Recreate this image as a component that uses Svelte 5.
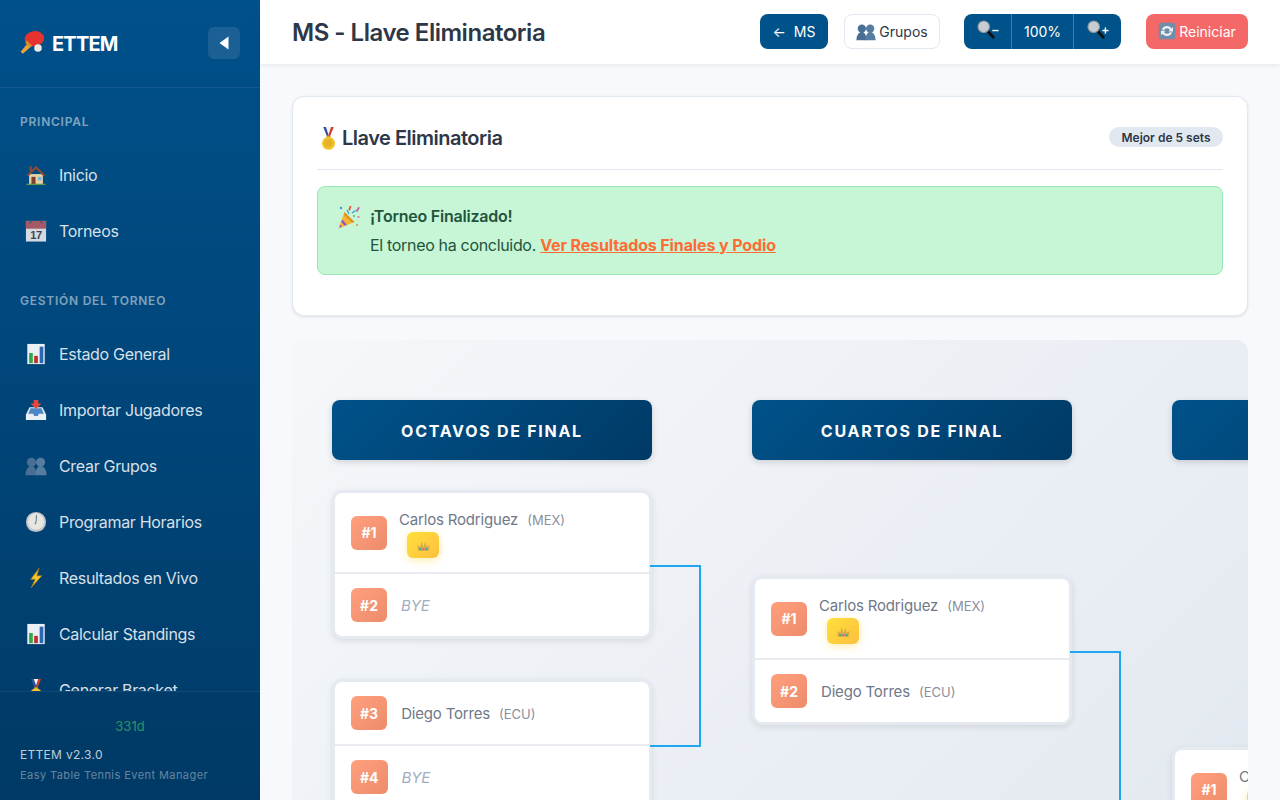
<script lang="ts">
  const sections = [
    { title: 'PRINCIPAL', items: [
      { icon: 'house', label: 'Inicio' },
      { icon: 'calendar', label: 'Torneos' }
    ]},
    { title: 'GESTIÓN DEL TORNEO', items: [
      { icon: 'chart', label: 'Estado General' },
      { icon: 'inbox', label: 'Importar Jugadores' },
      { icon: 'people', label: 'Crear Grupos' },
      { icon: 'clock', label: 'Programar Horarios' },
      { icon: 'bolt', label: 'Resultados en Vivo' },
      { icon: 'chart', label: 'Calcular Standings' },
      { icon: 'medal', label: 'Generar Bracket' }
    ]}
  ];

  const rounds = [
    { name: 'OCTAVOS DE FINAL', cls: 'r1', matches: [
      { line: 'down', players: [
        { seed: 1, name: 'Carlos Rodriguez', country: 'MEX', winner: true },
        { seed: 2, bye: true }
      ]},
      { line: 'flat', players: [
        { seed: 3, name: 'Diego Torres', country: 'ECU' },
        { seed: 4, bye: true }
      ]}
    ]},
    { name: 'CUARTOS DE FINAL', cls: 'r2', matches: [
      { line: 'long', players: [
        { seed: 1, name: 'Carlos Rodriguez', country: 'MEX', winner: true },
        { seed: 2, name: 'Diego Torres', country: 'ECU' }
      ]}
    ]},
    { name: 'SEMIFINALES', cls: 'r3', matches: [
      { line: '', players: [
        { seed: 1, name: 'Carlos Rodriguez', country: 'MEX', winner: true },
        { seed: 2, name: 'Diego Torres', country: 'ECU' }
      ]}
    ]}
  ];
</script>

{#snippet emoji(name: string, size: number)}
  <svg class="emoji" width={size} height={size} viewBox="0 0 24 24" aria-hidden="true">
    {#if name === 'paddle'}
      <path d="M6.5 13 L0.6 20 L2.6 22 L9.5 16 Z" fill="#e8a33a" />
      <ellipse cx="13.3" cy="8" rx="9" ry="7" fill="#e5332f" transform="rotate(-8 13.3 8)" />
      <path d="M5 12 L9 16.2 L11.5 14.8 L6 9.5 Z" fill="#d98c2b" />
      <circle cx="16.6" cy="16.6" r="3.5" fill="#ecebe8" />
    {:else if name === 'house'}
      <rect x="4.5" y="11" width="15" height="11" fill="#e8d3a8" />
      <path d="M12 2 L1.5 12.5 L4 13 L12 5.5 L20 13 L22.5 12.5 Z" fill="#8d4a36" />
      <rect x="5" y="2.5" width="2.5" height="5" fill="#8d4a36" />
      <rect x="7" y="14" width="4.5" height="8" fill="#7a3f2f" />
      <rect x="14" y="14" width="4" height="4" fill="#7db3d6" />
      <rect x="1.5" y="21.5" width="21" height="1.5" fill="#5f9a4a" />
    {:else if name === 'calendar'}
      <rect x="1" y="1" width="22" height="22.5" fill="#d4dbe2" />
      <rect x="1" y="1" width="22" height="8.5" fill="#a65a66" />
      <circle cx="6" cy="2.5" r="1.2" fill="#345d80" />
      <circle cx="18" cy="2.5" r="1.2" fill="#345d80" />
      <text x="12" y="21" text-anchor="middle" font-size="12" font-weight="600" font-family="Liberation Sans, sans-serif" fill="#3d4550">17</text>
    {:else if name === 'chart'}
      <rect x="2.5" y="1" width="19" height="22" fill="#eaf0f4" />
      <rect x="4.5" y="11" width="4" height="11" fill="#2fa84a" />
      <rect x="10" y="14" width="4" height="8" fill="#c62b2b" />
      <rect x="16" y="4" width="4" height="18" fill="#2a66b5" />
    {:else if name === 'inbox'}
      <path d="M5 9 H19 L23 17 V23 H1 V17 Z" fill="#e9eff4" />
      <path d="M6 10 H18 L20.5 16 H15 L14 18.5 H10 L9 16 H3.5 Z" fill="#4b87c4" />
      <path d="M9.5 1 H14.5 V5 H18 L12 10.5 L6 5 H9.5 Z" fill="#e5473f" />
    {:else if name === 'people'}
      <circle cx="7" cy="8" r="5" fill="#4a6f94" />
      <path d="M0.5 22 C0.5 15 4 12 7 12 C10 12 12.5 15 12.5 22 Z" fill="#4a6f94" />
      <circle cx="17" cy="8" r="5" fill="#567ca0" />
      <path d="M11.5 22 C11.5 15 14 12 17 12 C20 12 23.5 15 23.5 22 Z" fill="#567ca0" />
    {:else if name === 'clock'}
      <circle cx="12" cy="12" r="11" fill="#c0c4c8" />
      <circle cx="12" cy="11.5" r="9" fill="#e6e6e2" />
      <path d="M12 12 L12.6 4.5 M12 12 L10.8 14.5" stroke="#777b80" stroke-width="1.2" />
    {:else if name === 'bolt'}
      <path d="M15.5 1 L6 13.5 H11 L6.5 23 L18.5 9.5 H13 Z" fill="#f6c52c" stroke="#8a6a18" stroke-width="0.8" stroke-linejoin="round" />
    {:else if name === 'medal'}
      <path d="M6.5 0 H9.5 L12.5 10 H10.5 Z" fill="#2c4fa3" />
      <path d="M17.5 0 H14.5 L11.5 10 H13.5 Z" fill="#d5372f" />
      <path d="M9.5 0 H14.5 L12 7 Z" fill="#f2f2f2" />
      <rect x="10" y="9" width="4" height="2.5" fill="#c9952a" />
      <circle cx="12" cy="17" r="6.8" fill="#f2c52f" />
      <circle cx="12" cy="17" r="4.4" fill="#e6b226" />
    {:else if name === 'zoom-out' || name === 'zoom-in'}
      <path d="M10 10.5 L17 18" stroke="#111" stroke-width="3" stroke-linecap="round" />
      <circle cx="7" cy="7" r="6" fill="#c6cdd3" stroke="#8e969c" stroke-width="1.2" />
      <path d="M16 11 H22.5" stroke="#fff" stroke-width="1.5" />
      {#if name === 'zoom-in'}
        <path d="M19.2 7.8 V14.2" stroke="#fff" stroke-width="1.5" />
      {/if}
    {:else if name === 'refresh'}
      <rect x="1" y="1" width="22" height="22" rx="3.5" fill="#6d8ca8" />
      <path d="M5 10 A7.5 7.5 0 0 1 18 8.5 L20 6.5 V12.5 H14 L16 10.5 A4.8 4.8 0 0 0 8 10.5 Z" fill="#eef2f5" />
      <path d="M19 14 A7.5 7.5 0 0 1 6 15.5 L4 17.5 V11.5 H10 L8 13.5 A4.8 4.8 0 0 0 16 13.5 Z" fill="#eef2f5" />
    {:else if name === 'party'}
      <path d="M1.5 23.5 L7.5 7 L17.5 17 Z" fill="#f2b92e" />
      <path d="M5.2 14.5 L10 19.8 L7.8 20.8 L4.2 17 Z" fill="#a14fc2" />
      <path d="M3 19.5 L5 21.8 L2.6 22.8 Z" fill="#a14fc2" />
      <path d="M7.5 7 L17.5 17 L15 17.7 L7 10 Z" fill="#e0912a" />
      <circle cx="4" cy="3" r="1.2" fill="#3f8ed8" />
      <rect x="12" y="0.5" width="1.8" height="4.5" fill="#e5533f" transform="rotate(20 12 3)" />
      <rect x="20" y="1.5" width="1.8" height="5" fill="#c85bb0" transform="rotate(30 20 4)" />
      <path d="M10 5 L12 9 M15 8 L18.5 5.5" stroke="#3fa0d8" stroke-width="1.4" />
      <circle cx="21.5" cy="12" r="1.1" fill="#e5738f" />
      <circle cx="20" cy="20" r="1.1" fill="#d8a03f" />
      <circle cx="17" cy="11" r="1" fill="#58b368" />
    {:else if name === 'crown'}
      <path d="M3 20 L2.5 11 L7 14 L9 5 L11.5 14 L12.5 14 L15 5 L17 14 L21.5 11 L21 20 Z" fill="#c9a24a" opacity="0.8" />
      <circle cx="7" cy="18" r="2" fill="#4fa88a" />
      <circle cx="12" cy="18" r="2" fill="#d0708a" />
      <circle cx="17" cy="18" r="2" fill="#4fa88a" />
    {/if}
  </svg>
{/snippet}

<div class="layout">
  <aside class="sidebar">
    <div class="brand">
      <div class="logo">
        {@render emoji('paddle', 26)}
        <span>ETTEM</span>
      </div>
      <button class="collapse" aria-label="Colapsar">
        <svg width="10" height="14" viewBox="0 0 10 14"><path d="M9.5 0.5 V13.5 L0.5 7 Z" fill="#fff" /></svg>
      </button>
    </div>

    <nav class="nav">
      {#each sections as section (section.title)}
        <div class="nav-section">
          <div class="nav-title">{section.title}</div>
          {#each section.items as item (item.label)}
            <div class="nav-item">
              {@render emoji(item.icon, 22)}
              <span>{item.label}</span>
            </div>
          {/each}
        </div>
      {/each}
    </nav>

    <div class="side-footer">
      <div class="days">331d</div>
      <div class="version">ETTEM v2.3.0</div>
      <div class="tagline">Easy Table Tennis Event Manager</div>
    </div>
  </aside>

  <main class="main">
    <header class="topbar">
      <h1>MS - Llave Eliminatoria</h1>
      <div class="actions">
        <button class="btn primary back"><span class="arrow">←</span> MS</button>
        <button class="btn light">{@render emoji('people', 20)} Grupos</button>
        <div class="zoom">
          <button class="zoom-btn" aria-label="Alejar">{@render emoji('zoom-out', 23)}</button>
          <span class="zoom-level">100%</span>
          <button class="zoom-btn" aria-label="Acercar">{@render emoji('zoom-in', 23)}</button>
        </div>
        <button class="btn danger">{@render emoji('refresh', 18)} Reiniciar</button>
      </div>
    </header>

    <div class="content">
      <section class="card">
        <div class="card-head">
          <h2>{@render emoji('medal', 23)} Llave Eliminatoria</h2>
          <span class="pill">Mejor de 5 sets</span>
        </div>
        <div class="alert">
          {@render emoji('party', 24)}
          <div class="alert-body">
            <strong>¡Torneo Finalizado!</strong>
            <p>El torneo ha concluido. <a href="#podio">Ver Resultados Finales y Podio</a></p>
          </div>
        </div>
      </section>

      <section class="bracket">
        {#each rounds as round (round.name)}
          <div class="round {round.cls}">
            <div class="round-head">{round.name}</div>
            <div class="matches">
              {#each round.matches as match, mi (mi)}
                <div class="match">
                  {#each match.players as p (p.seed)}
                    <div class="row">
                      <span class="seed">#{p.seed}</span>
                      {#if p.bye}
                        <span class="bye">BYE</span>
                      {:else}
                        <div class="player" class:has-crown={p.winner}>
                          <div class="player-line">
                            <span class="name">{p.name}</span>
                            <span class="country">({p.country})</span>
                          </div>
                          {#if p.winner}
                            <span class="crown">{@render emoji('crown', 15)}</span>
                          {/if}
                        </div>
                      {/if}
                    </div>
                  {/each}
                  {#if match.line}
                    <div class="connector {match.line}"></div>
                  {/if}
                </div>
              {/each}
            </div>
          </div>
        {/each}
      </section>
    </div>
  </main>
</div>

<style>
  :global(body) { margin: 0; font-family: Inter, "Liberation Sans", sans-serif; background: #f7f9fc; }

  .layout { display: flex; height: 800px; overflow: hidden; }
  .emoji { flex: none; display: block; }

  /* Sidebar */
  .sidebar {
    width: 260px; flex: none; height: 800px;
    display: flex; flex-direction: column;
    background: linear-gradient(180deg, #00508a 0%, #003b68 100%);
    color: #fff;
  }
  .brand {
    height: 86px; flex: none; padding: 0 20px 1px;
    display: flex; align-items: center; justify-content: space-between;
    border-bottom: 1px solid rgba(255,255,255,0.07);
  }
  .logo { display: flex; align-items: center; gap: 6px; font-size: 20px; font-weight: 700; letter-spacing: -0.04em; }
  .logo span { margin-top: 2px; }
  .collapse {
    width: 32px; height: 32px; border: 0; border-radius: 6px; padding: 0;
    background: rgba(255,255,255,0.1);
    display: flex; align-items: center; justify-content: center;
  }
  .nav { flex: 1; min-height: 0; overflow: hidden; padding-top: 25px; }
  .nav-section { margin-bottom: 33px; }
  .nav-title {
    height: 18px; line-height: 18px; margin-bottom: 16px; padding-left: 20px;
    font-size: 12px; font-weight: 600; letter-spacing: 0.75px; color: rgba(255,255,255,0.5);
  }
  .nav-item {
    height: 56px; display: flex; align-items: center; gap: 12px; padding-left: 25px;
    font-size: 16px; letter-spacing: -0.02em; color: rgba(255,255,255,0.85);
  }
  .side-footer {
    flex: none; height: 108px; padding: 0 20px;
    background: rgba(0,0,0,0.02); border-top: 1px solid rgba(255,255,255,0.07);
  }
  .days { margin-top: 25px; text-align: center; font-size: 13px; line-height: 18px; color: #38a169; opacity: 0.85; }
  .version { margin-top: 11px; font-size: 12px; line-height: 18px; letter-spacing: 0.3px; color: rgba(255,255,255,0.75); }
  .tagline { margin-top: 2px; font-size: 11px; line-height: 18px; letter-spacing: 0.43px; color: rgba(255,255,255,0.4); }

  /* Top bar */
  .main { flex: 1; min-width: 0; height: 800px; overflow: hidden; }
  .topbar {
    height: 64px; box-sizing: border-box; padding: 0 32px 1px;
    display: flex; align-items: center; justify-content: space-between;
    background: #fff; box-shadow: 0 2px 4px rgba(0,0,0,0.06);
    position: relative;
  }
  h1 { margin: 2px 0 0; font-size: 24px; font-weight: 600; letter-spacing: -0.02em; color: #2d3748; }
  .actions { display: flex; align-items: center; }
  .btn {
    height: 35px; box-sizing: border-box; border-radius: 8px; border: 0;
    display: flex; align-items: center; justify-content: center; gap: 4px;
    font-family: inherit; font-size: 14px;
  }
  .primary { background: #00528a; color: #fff; }
  .back { width: 68px; gap: 8px; }
  .arrow { font-size: 14px; }
  .light { width: 96px; margin-left: 16px; background: #fff; color: #2d3748; border: 1px solid #e2e8f0; gap: 3px; }
  .zoom {
    margin-left: 24px; width: 157px; height: 35px; border-radius: 8px;
    display: flex; background: #00528a; color: #fff;
  }
  .zoom-btn {
    width: 47px; flex: none; border: 0; padding: 0 0 0 1px; background: none;
    display: flex; align-items: center; justify-content: center;
  }
  .zoom-level {
    flex: 1; display: flex; align-items: center; justify-content: center; font-size: 14px; padding-bottom: 1px;
    border-left: 1px solid rgba(255,255,255,0.25); border-right: 1px solid rgba(255,255,255,0.25);
  }
  .danger { width: 102px; margin-left: 25px; padding-bottom: 2px; background: #f56565; color: #fff; opacity: 0.98; gap: 3px; }

  /* Content */
  .content { padding: 32px; }
  .card {
    height: 220px; box-sizing: border-box; padding: 0 24px;
    background: #fff; border: 1px solid #e2e8f0; border-radius: 12px;
    box-shadow: 0 1px 3px rgba(0,0,0,0.1);
  }
  .card-head {
    height: 72px; display: flex; align-items: center; justify-content: space-between;
    border-bottom: 1px solid #e2e8f0; margin-bottom: 16px;
  }
  h2 { margin: 10px 0 0; display: flex; align-items: center; gap: 2px; font-size: 20px; font-weight: 600; letter-spacing: -0.025em; color: #2d3748; }
  .pill {
    margin-top: 7px; padding: 0 12.5px; height: 20px; line-height: 21px; border-radius: 10px;
    background: #e2e8f0; color: #2d3748; font-size: 12px; font-weight: 600;
  }
  .alert {
    height: 89px; box-sizing: border-box; padding: 18px 19px 0;
    display: flex; gap: 9px;
    background: #c6f6d5; border: 1px solid #9ae6b4; border-radius: 8px; color: #22543d;
  }
  .alert-body strong { display: block; font-size: 16px; font-weight: 600; line-height: 22px; letter-spacing: -0.014em; }
  .alert-body p { margin: 7px 0 0; font-size: 16px; line-height: 22px; letter-spacing: -0.02em; }
  .alert-body a { color: #ff6b35; font-weight: 700; letter-spacing: -0.0075em; }

  /* Bracket */
  .bracket {
    margin-top: 24px; height: 600px; box-sizing: border-box; padding: 60px 40px;
    display: flex; gap: 100px; overflow: hidden;
    background: linear-gradient(135deg, #f5f7fa 0%, #e2e8f0 100%);
    border-radius: 12px;
  }
  .round { width: 320px; flex: none; }
  .round-head {
    height: 60px; padding-top: 1px; box-sizing: border-box; display: flex; align-items: center; justify-content: center;
    background: linear-gradient(135deg, #00528a 0%, #003a66 100%);
    border-radius: 8px; box-shadow: 0 2px 6px rgba(0,0,0,0.15);
    color: #fff; font-size: 16px; font-weight: 700; letter-spacing: 1.73px;
  }
  .matches { display: flex; flex-direction: column; gap: 40px; padding-top: 30px; }
  .r2 .matches { padding-top: 116px; }
  .r3 .matches { padding-top: 287px; }
  .match {
    position: relative; background: #fff; border: 3px solid #e5eaf1; border-radius: 10px;
    box-shadow: 0 2px 6px rgba(0,0,0,0.1);
  }
  .row { display: flex; align-items: center; gap: 14px; padding: 14px 16px; }
  .row + .row { border-top: 2px solid #e8ecf2; }
  .seed {
    flex: none; height: 34px; min-width: 36px; box-sizing: border-box; padding: 0 9px;
    display: flex; align-items: center; justify-content: center;
    background: linear-gradient(135deg, #ff9f7c 0%, #ec8c6c 100%);
    border-radius: 6px; color: #fff; font-size: 14px; font-weight: 700;
  }
  .name { font-size: 15px; letter-spacing: -0.012em; color: #6f7889; }
  .country { margin-left: 9px; font-size: 13px; color: #8a8f9e; }
  .bye { font-size: 15px; font-style: italic; letter-spacing: -0.012em; color: #a0aec0; }
  .player.has-crown { margin-left: -2px; }
  .player:not(.has-crown) { margin-top: 2px; }
  .player-line { height: 25px; display: flex; align-items: baseline; white-space: nowrap; line-height: 25px; }
  .player:not(.has-crown) .player-line { height: 22px; line-height: 22px; }
  .crown {
    width: 32px; height: 26px; margin-left: 8px;
    display: flex; align-items: center; justify-content: center;
    background: linear-gradient(135deg, #ffe03c 0%, #fdbf3e 100%);
    border-radius: 6px; box-shadow: 0 2px 8px rgba(255,200,0,0.35);
  }
  .connector { position: absolute; left: calc(100% + 1px); top: 50%; width: 49px; border-top: 2px solid #1ea7ee; }
  .connector.down { height: 179px; border-right: 2px solid #1ea7ee; }
  .connector.long { height: 360px; border-right: 2px solid #1ea7ee; }
  .connector.flat { width: 51px; }
</style>
